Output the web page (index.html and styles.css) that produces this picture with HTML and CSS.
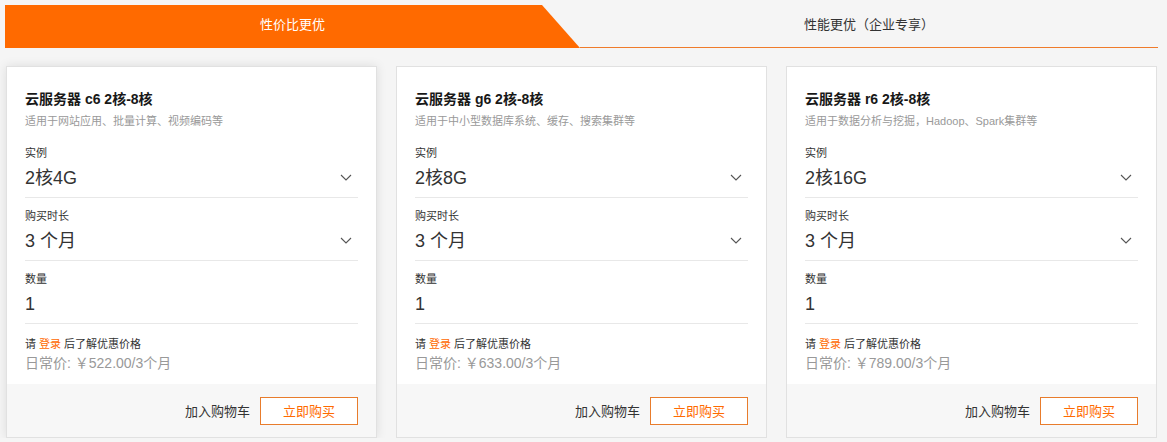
FILE: index.html
```html
<!DOCTYPE html>
<html lang="zh-CN">
  <head>
    <meta charset="UTF-8" />
    <meta name="viewport" content="width=device-width, initial-scale=1.0" />
    <title>云服务器</title>
    <link rel="stylesheet" href="styles.css">
  </head>
  <body>
    <div class="tabs">
      <div class="tab tab-active">性价比更优</div>
      <div class="tab">性能更优（企业专享）</div>
    </div>

    <div class="plans">
      <div class="plan plan-hover">
        <div class="plan-body">
          <h3 class="plan-title">云服务器 c6 2核-8核</h3>
          <p class="plan-desc">适用于网站应用、批量计算、视频编码等</p>
          <div class="field">
            <div class="field-label">实例</div>
            <div class="field-value">2核4G
              <svg class="chevron" width="12" height="7" viewBox="0 0 12 7"><path d="M1 1l5 5 5-5" fill="none" stroke="#555" stroke-width="1.1"/></svg>
            </div>
          </div>
          <div class="field">
            <div class="field-label">购买时长</div>
            <div class="field-value">3 个月
              <svg class="chevron" width="12" height="7" viewBox="0 0 12 7"><path d="M1 1l5 5 5-5" fill="none" stroke="#555" stroke-width="1.1"/></svg>
            </div>
          </div>
          <div class="field">
            <div class="field-label">数量</div>
            <div class="field-value">1</div>
          </div>
          <p class="login-tip">请 <a href="#">登录</a> 后了解优惠价格</p>
          <p class="price">日常价: ￥522.00/3个月</p>
        </div>
        <div class="plan-footer">
          <span class="add-cart">加入购物车</span>
          <button class="buy">立即购买</button>
        </div>
      </div>

      <div class="plan">
        <div class="plan-body">
          <h3 class="plan-title">云服务器 g6 2核-8核</h3>
          <p class="plan-desc">适用于中小型数据库系统、缓存、搜索集群等</p>
          <div class="field">
            <div class="field-label">实例</div>
            <div class="field-value">2核8G
              <svg class="chevron" width="12" height="7" viewBox="0 0 12 7"><path d="M1 1l5 5 5-5" fill="none" stroke="#555" stroke-width="1.1"/></svg>
            </div>
          </div>
          <div class="field">
            <div class="field-label">购买时长</div>
            <div class="field-value">3 个月
              <svg class="chevron" width="12" height="7" viewBox="0 0 12 7"><path d="M1 1l5 5 5-5" fill="none" stroke="#555" stroke-width="1.1"/></svg>
            </div>
          </div>
          <div class="field">
            <div class="field-label">数量</div>
            <div class="field-value">1</div>
          </div>
          <p class="login-tip">请 <a href="#">登录</a> 后了解优惠价格</p>
          <p class="price">日常价: ￥633.00/3个月</p>
        </div>
        <div class="plan-footer">
          <span class="add-cart">加入购物车</span>
          <button class="buy">立即购买</button>
        </div>
      </div>

      <div class="plan">
        <div class="plan-body">
          <h3 class="plan-title">云服务器 r6 2核-8核</h3>
          <p class="plan-desc">适用于数据分析与挖掘，Hadoop、Spark集群等</p>
          <div class="field">
            <div class="field-label">实例</div>
            <div class="field-value">2核16G
              <svg class="chevron" width="12" height="7" viewBox="0 0 12 7"><path d="M1 1l5 5 5-5" fill="none" stroke="#555" stroke-width="1.1"/></svg>
            </div>
          </div>
          <div class="field">
            <div class="field-label">购买时长</div>
            <div class="field-value">3 个月
              <svg class="chevron" width="12" height="7" viewBox="0 0 12 7"><path d="M1 1l5 5 5-5" fill="none" stroke="#555" stroke-width="1.1"/></svg>
            </div>
          </div>
          <div class="field">
            <div class="field-label">数量</div>
            <div class="field-value">1</div>
          </div>
          <p class="login-tip">请 <a href="#">登录</a> 后了解优惠价格</p>
          <p class="price">日常价: ￥789.00/3个月</p>
        </div>
        <div class="plan-footer">
          <span class="add-cart">加入购物车</span>
          <button class="buy">立即购买</button>
        </div>
      </div>
    </div>
  </body>
</html>
```

FILE: styles.css
```css
body {
  margin: 0;
  background-color: #f5f5f5;
  font-family: "Liberation Sans", "Noto Sans CJK SC", sans-serif;
  color: #333;
}
.tabs {
  display: flex;
  height: 43px;
  margin: 5px 9px 0 5px;
}
.tab {
  flex: 1;
  font-size: 13px;
  line-height: 40px;
  padding-bottom: 2px;
  text-align: center;
  border-bottom: 1px solid #ef7b2b;
  box-sizing: border-box;
}
.tab-active {
  flex: 0 0 575px;
  background-color: #ff6a00;
  color: #fff;
  border-bottom: none;
  clip-path: polygon(0 0, 537px 0, 100% 100%, 0 100%);
}
.plans {
  display: grid;
  grid-template-columns: repeat(3, 1fr);
  gap: 19px;
  margin: 18px 10px 0 6px;
}
.plan {
  background-color: #fff;
  border: 1px solid #e1e1e1;
  display: flex;
  flex-direction: column;
}
.plan-hover {
  box-shadow: 0 0 10px rgba(0, 0, 0, 0.1);
}
.plan-body {
  padding: 21px 18px 11px 18px;
}
.plan-title {
  margin: 0;
  font-size: 14px;
  line-height: 22px;
  font-weight: bold;
  color: #181818;
}
.plan-desc {
  margin: 1px 0 4px;
  font-size: 11px;
  line-height: 20px;
  color: #999;
}
.field {
  padding: 8px 0 3px;
  border-bottom: 1px solid #e8e8e8;
}
.field-label {
  font-size: 11px;
  line-height: 20px;
}
.field-value {
  display: flex;
  justify-content: space-between;
  align-items: center;
  font-size: 18px;
  line-height: 31px;
}
.chevron {
  margin-right: 6px;
  margin-top: -2px;
}
.login-tip {
  margin: 11px 0 0;
  font-size: 11px;
  line-height: 18px;
}
.login-tip a {
  color: #ff6a00;
  text-decoration: none;
}
.price {
  margin: 0;
  font-size: 14px;
  line-height: 20px;
  color: #999;
}
.plan-footer {
  flex: 1;
  display: flex;
  justify-content: flex-end;
  align-items: center;
  background-color: #f7f7f7;
  padding: 0 18px;
  min-height: 53px;
}
.add-cart {
  font-size: 13px;
  margin-right: 10px;
}
.buy {
  width: 98px;
  height: 28px;
  padding: 0;
  background-color: #fff;
  border: 1px solid #e87c2c;
  color: #ff6a00;
  font-family: inherit;
  font-size: 13px;
  cursor: pointer;
}
.buy:hover {
  background-color: #fff3ea;
}
```
